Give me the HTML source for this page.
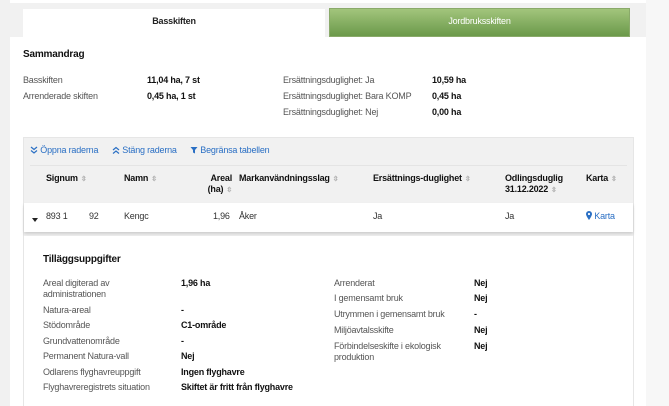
<!DOCTYPE html>
<html><head><meta charset="utf-8"><style>
*{margin:0;padding:0;box-sizing:border-box}
body{width:669px;height:406px;background:#f1f1f1;font-family:"Liberation Sans",sans-serif;font-size:9px;color:#333;position:relative;overflow:hidden;letter-spacing:-0.2px}
.a{position:absolute;white-space:nowrap}
b,.b{font-weight:bold;color:#111}
.l{color:#555}
.blue{color:#2a6fc4}
.s{color:#aaa;font-size:7px;margin-left:3px}
svg{vertical-align:-1px}
</style></head><body>
<div class="a" style="left:10px;top:0;width:636px;height:3px;background:#fff"></div>
<div class="a" style="left:646px;top:0;width:23px;height:406px;background:#f7f7f7"></div>
<div class="a" style="left:23px;top:9px;width:302px;height:30px;background:#fff;text-align:center;line-height:25px;font-weight:bold;color:#222">Basskiften</div>
<div class="a" style="left:329px;top:8px;width:301px;height:29px;background:linear-gradient(#a2c57c,#6b994a);border:1px solid #8aaa6a;text-align:center;line-height:25px;color:#fff">Jordbruksskiften</div>
<div class="a" style="left:10px;top:37px;width:636px;height:369px;background:#fff"></div>
<div class="a b" style="left:23px;top:49px;font-size:10px">Sammandrag</div>
<div class="a l" style="left:23px;top:75px">Basskiften</div><div class="a b" style="left:147px;top:75px">11,04 ha, 7 st</div>
<div class="a l" style="left:23px;top:91px">Arrenderade skiften</div><div class="a b" style="left:147px;top:91px">0,45 ha, 1 st</div>
<div class="a l" style="left:283px;top:75px">Ersättningsduglighet: Ja</div><div class="a b" style="left:432px;top:75px">10,59 ha</div>
<div class="a l" style="left:283px;top:91px">Ersättningsduglighet: Bara KOMP</div><div class="a b" style="left:432px;top:91px">0,45 ha</div>
<div class="a l" style="left:283px;top:107px">Ersättningsduglighet: Nej</div><div class="a b" style="left:432px;top:107px">0,00 ha</div>
<div class="a" style="left:23px;top:137px;width:611px;height:269px;background:#f1f1f1;border:1px solid #e6e6e6"></div>
<div class="a blue" style="left:30px;top:145px"><svg width="8" height="8" viewBox="0 0 8 8"><path d="M1 1l3 2.5L7 1M1 4.5l3 2.5 3-2.5" fill="none" stroke="#2a6fc4" stroke-width="1.2"/></svg> Öppna raderna</div>
<div class="a blue" style="left:112px;top:145px"><svg width="8" height="8" viewBox="0 0 8 8"><path d="M1 4l3-2.5L7 4M1 7.5L4 5l3 2.5" fill="none" stroke="#2a6fc4" stroke-width="1.2"/></svg> Stäng raderna</div>
<div class="a blue" style="left:190px;top:145px"><svg width="8" height="8" viewBox="0 0 8 8"><path d="M0.5 1h7L5 4v3.5L3 6.5V4z" fill="#2a6fc4"/></svg> Begränsa tabellen</div>
<div class="a" style="left:30px;top:165px;width:597px;height:1px;background:#e4e4e4"></div>
<div class="a b" style="left:46px;top:173px">Signum<span class="s">⇳</span></div>
<div class="a b" style="left:124px;top:173px">Namn<span class="s">⇳</span></div>
<div class="a b" style="left:190px;top:173px;text-align:right;width:42px;line-height:11px">Areal<br>(ha)<span class="s">⇳</span></div>
<div class="a b" style="left:239px;top:173px">Markanvändningsslag<span class="s">⇳</span></div>
<div class="a b" style="left:373px;top:173px">Ersättnings-duglighet<span class="s">⇳</span></div>
<div class="a b" style="left:505px;top:173px;line-height:11px">Odlingsduglig<br>31.12.2022<span class="s">⇳</span></div>
<div class="a b" style="left:586px;top:173px">Karta<span class="s">⇳</span></div>
<div class="a" style="left:24px;top:203px;width:609px;height:29px;background:#fff;box-shadow:0 2px 3px rgba(0,0,0,.15)"></div>
<div class="a" style="left:32px;top:213px"><svg width="6" height="4" viewBox="0 0 6 4"><path d="M0 0h6L3 4z" fill="#222"/></svg></div>
<div class="a" style="left:46px;top:211px">893 1</div><div class="a" style="left:89px;top:211px">92</div>
<div class="a" style="left:124px;top:211px">Kengc</div>
<div class="a" style="left:213px;top:211px">1,96</div>
<div class="a" style="left:239px;top:211px">Åker</div>
<div class="a" style="left:373px;top:211px">Ja</div>
<div class="a" style="left:505px;top:211px">Ja</div>
<div class="a blue" style="left:586px;top:211px"><svg width="6" height="9" viewBox="0 0 6 9"><path d="M3 0a3 3 0 0 0-3 3c0 2 3 6 3 6s3-4 3-6a3 3 0 0 0-3-3z" fill="#2a6fc4"/><circle cx="3" cy="3" r="1.1" fill="#fff"/></svg> Karta</div>
<div class="a" style="left:24px;top:236px;width:609px;height:170px;background:#fff"></div>
<div class="a b" style="left:43px;top:254px;font-size:10px">Tilläggsuppgifter</div>
<div class="a l" style="left:43px;top:278px;line-height:11px">Areal digiterad av<br>administrationen</div><div class="a b" style="left:181px;top:278px">1,96 ha</div>
<div class="a l" style="left:43px;top:305px">Natura-areal</div><div class="a b" style="left:181px;top:305px">-</div>
<div class="a l" style="left:43px;top:320px">Stödområde</div><div class="a b" style="left:181px;top:320px">C1-område</div>
<div class="a l" style="left:43px;top:336px">Grundvattenområde</div><div class="a b" style="left:181px;top:336px">-</div>
<div class="a l" style="left:43px;top:351px">Permanent Natura-vall</div><div class="a b" style="left:181px;top:351px">Nej</div>
<div class="a l" style="left:43px;top:367px">Odlarens flyghavreuppgift</div><div class="a b" style="left:181px;top:367px">Ingen flyghavre</div>
<div class="a l" style="left:43px;top:382px">Flyghavreregistrets situation</div><div class="a b" style="left:181px;top:382px">Skiftet är fritt från flyghavre</div>
<div class="a l" style="left:334px;top:278px">Arrenderat</div><div class="a b" style="left:474px;top:278px">Nej</div>
<div class="a l" style="left:334px;top:293px">I gemensamt bruk</div><div class="a b" style="left:474px;top:293px">Nej</div>
<div class="a l" style="left:334px;top:309px">Utrymmen i gemensamt bruk</div><div class="a b" style="left:474px;top:309px">-</div>
<div class="a l" style="left:334px;top:325px">Miljöavtalsskifte</div><div class="a b" style="left:474px;top:325px">Nej</div>
<div class="a l" style="left:334px;top:341px;line-height:11px">Förbindelseskifte i ekologisk<br>produktion</div><div class="a b" style="left:474px;top:341px">Nej</div>
</body></html>
